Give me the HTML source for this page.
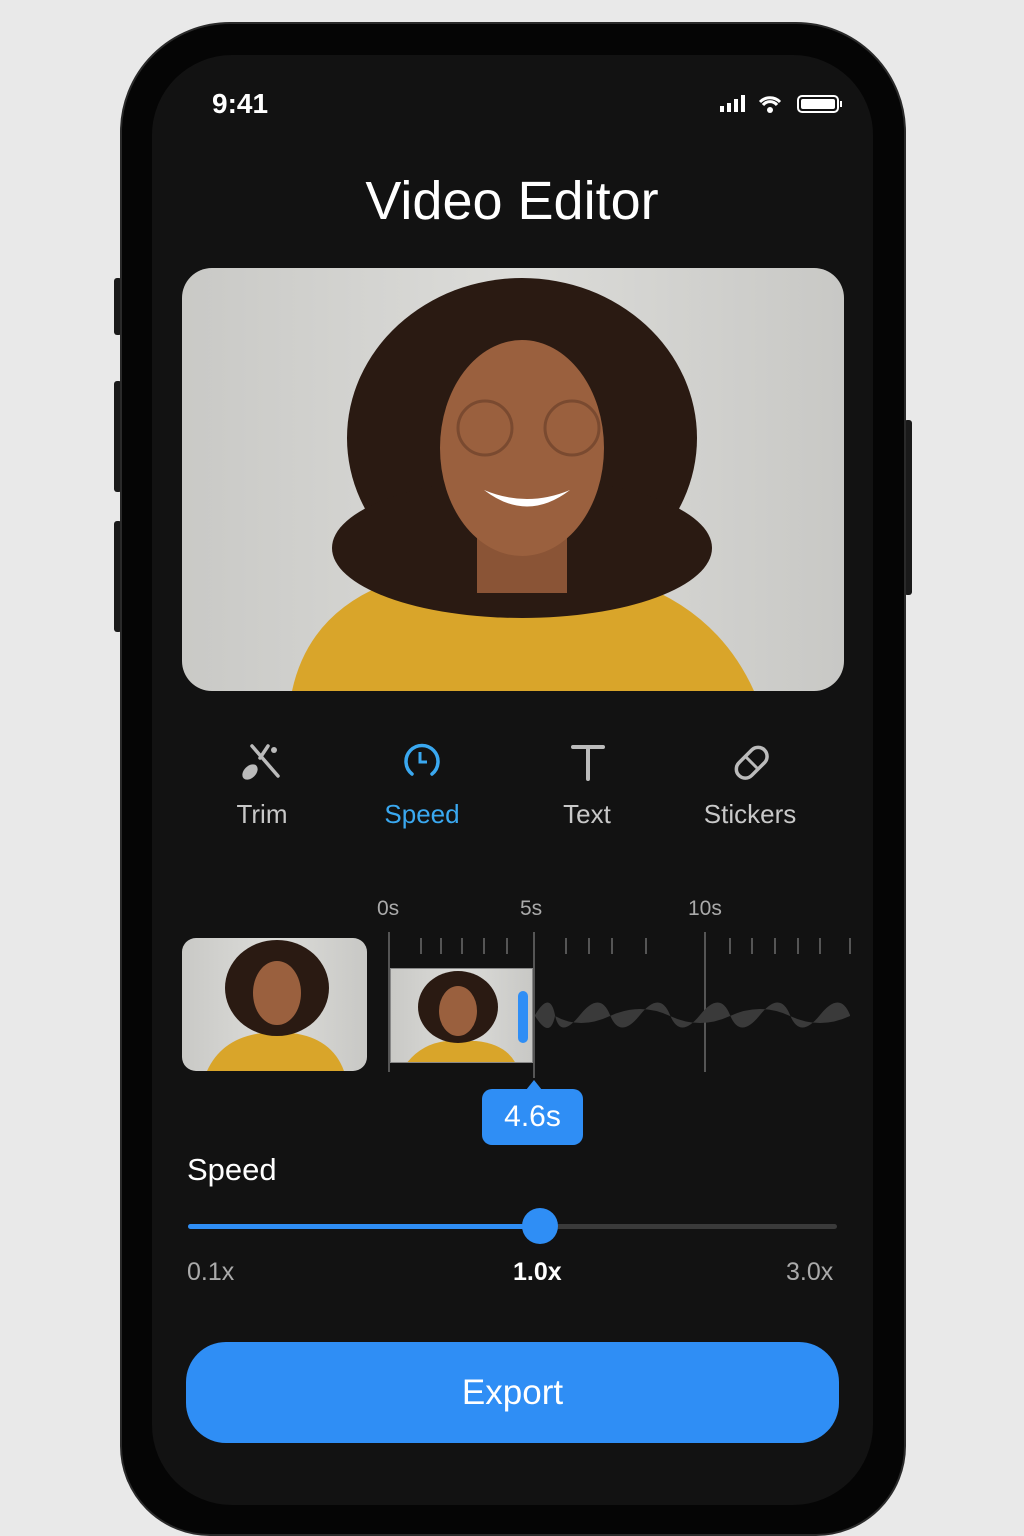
<!DOCTYPE html>
<html><head><meta charset="utf-8"><style>
*{margin:0;padding:0;box-sizing:border-box}
html,body{width:1024px;height:1536px;overflow:hidden}
body{background:#e9e9e9;position:relative;font-family:"Liberation Sans",sans-serif}
.abs{position:absolute}
.phone{left:120px;top:22px;width:786px;height:1514px;background:#050505;border-radius:110px 110px 90px 90px;border:2px solid #2a2a2a}
.screen{left:152px;top:55px;width:721px;height:1450px;background:#121212;border-radius:80px}
.btn{background:#1a1a1a;border-radius:3px}
.photo{overflow:hidden;background:linear-gradient(90deg,#c9c9c6,#dcdcd9 50%,#c8c8c5)}
.t{color:#fff;position:absolute}
</style></head><body>
<div class="abs btn" style="left:114px;top:278px;width:8px;height:57px"></div>
<div class="abs btn" style="left:114px;top:381px;width:8px;height:111px"></div>
<div class="abs btn" style="left:114px;top:521px;width:8px;height:111px"></div>
<div class="abs btn" style="left:904px;top:420px;width:8px;height:175px"></div>
<div class="abs phone"></div>
<div class="abs screen"></div>

<div class="t" style="left:212px;top:88px;font-size:28px;font-weight:bold">9:41</div>
<svg class="abs" style="left:718px;top:93px" width="126" height="22">
<rect x="2" y="13" width="4" height="6" fill="#fff"/><rect x="9" y="10" width="4" height="9" fill="#fff"/><rect x="16" y="6" width="4" height="13" fill="#fff"/><rect x="23" y="2" width="4" height="17" fill="#fff"/>
<path d="M42 9a14 14 0 0 1 20 0M45 12a9 9 0 0 1 14 0" stroke="#fff" stroke-width="3" fill="none"/><circle cx="52" cy="17" r="3" fill="#fff"/>
<rect x="80" y="3" width="40" height="16" rx="4" fill="none" stroke="#fff" stroke-width="2"/><rect x="83" y="6" width="34" height="10" rx="2" fill="#fff"/><rect x="122" y="8" width="2" height="6" fill="#fff"/>
</svg>
<div class="t" style="left:0;width:1024px;text-align:center;top:170px;font-size:54px">Video Editor</div>

<div class="abs photo" style="left:182px;top:268px;width:662px;height:423px;border-radius:30px">
 <svg width="662" height="423" viewBox="0 0 662 423">
 <path d="M110 423 Q130 330 240 305 L420 305 Q530 330 572 423Z" fill="#d9a52a"/>
 <ellipse cx="340" cy="170" rx="175" ry="160" fill="#2a1a12"/>
 <ellipse cx="340" cy="280" rx="190" ry="70" fill="#2a1a12"/>
 <rect x="295" y="240" width="90" height="85" fill="#8a5436"/>
 <ellipse cx="340" cy="180" rx="82" ry="108" fill="#9a603e"/>
 <circle cx="303" cy="160" r="27" fill="none" stroke="#7a4a30" stroke-width="3"/>
 <circle cx="390" cy="160" r="27" fill="none" stroke="#7a4a30" stroke-width="3"/>
 <path d="M302 222 Q345 255 388 222 Q345 240 302 222Z" fill="#fff"/>
 </svg>
</div>

<svg class="abs" style="left:240px;top:742px" width="44" height="40"><path d="M12 4 L38 34 M28 4 L20 16" stroke="#bbb" stroke-width="3.5" stroke-linecap="round"/><circle cx="34" cy="8" r="3" fill="#bbb"/><ellipse cx="10" cy="30" rx="6" ry="9" transform="rotate(45 10 30)" fill="#bbb"/></svg>
<svg class="abs" style="left:400px;top:740px" width="44" height="44"><path d="M12 34 A16 16 0 1 1 32 34" stroke="#3aa8f0" stroke-width="3.5" fill="none" stroke-linecap="round"/><path d="M20 12 V22 H27" stroke="#3aa8f0" stroke-width="3" fill="none"/></svg>
<svg class="abs" style="left:570px;top:744px" width="36" height="38"><path d="M3 3 H33 M18 3 V35" stroke="#bbb" stroke-width="4" stroke-linecap="round"/></svg>
<svg class="abs" style="left:729px;top:740px" width="44" height="44"><rect x="4" y="14" width="36" height="18" rx="9" transform="rotate(-45 22 22)" fill="none" stroke="#bbb" stroke-width="3.5"/><path d="M16 16 L28 28" stroke="#bbb" stroke-width="3"/></svg>
<div class="t" style="left:212px;width:100px;text-align:center;top:799px;font-size:26px;color:#c8c8c8">Trim</div>
<div class="t" style="left:362px;width:120px;text-align:center;top:799px;font-size:26px;color:#3aa8f0">Speed</div>
<div class="t" style="left:537px;width:100px;text-align:center;top:799px;font-size:26px;color:#c8c8c8">Text</div>
<div class="t" style="left:690px;width:120px;text-align:center;top:799px;font-size:26px;color:#c8c8c8">Stickers</div>

<div class="t" style="left:377px;top:897px;font-size:21px;color:#aaa">0s</div>
<div class="t" style="left:520px;top:897px;font-size:21px;color:#aaa">5s</div>
<div class="t" style="left:688px;top:897px;font-size:21px;color:#aaa">10s</div>
<svg class="abs" style="left:380px;top:930px" width="480" height="150">
<g stroke="#555" stroke-width="2"><path d="M9 2V142M154 2V148M325 2V142"/>
<path d="M41 8V24M61 8V24M82 8V24M104 8V24M127 8V24M186 8V24M209 8V24M232 8V24M266 8V24M350 8V24M372 8V24M395 8V24M418 8V24M440 8V24M470 8V24"/></g>
<path d="M155 85 Q170 60 175 85 T200 85 T230 85 T260 85 T290 85 T320 85 T350 85 T380 85 T410 85 T440 85 T470 85 L470 86 Q440 100 410 86 T350 86 T290 86 T230 86 T175 86 Q170 110 155 86Z" fill="#3a3a3a"/>
</svg>
<div class="abs photo" style="left:182px;top:938px;width:185px;height:133px;border-radius:14px">
 <svg width="185" height="133"><path d="M25 133 Q40 100 80 95 L110 95 Q150 100 162 133Z" fill="#d9a52a"/><ellipse cx="95" cy="50" rx="52" ry="48" fill="#2a1a12"/><ellipse cx="95" cy="55" rx="24" ry="32" fill="#9a603e"/></svg>
</div>
<div class="abs photo" style="left:390px;top:968px;width:143px;height:95px;border:1px solid #888">
 <svg width="143" height="95"><path d="M15 95 Q30 75 55 72 L85 72 Q115 75 125 95Z" fill="#d9a52a"/><ellipse cx="67" cy="38" rx="40" ry="36" fill="#2a1a12"/><ellipse cx="67" cy="42" rx="19" ry="25" fill="#9a603e"/></svg>
 <div class="abs" style="left:127px;top:22px;width:10px;height:52px;background:#2f8ef5;border-radius:5px"></div>
</div>
<div class="abs" style="left:482px;top:1089px;width:101px;height:56px;background:#2f8ef5;border-radius:10px;color:#fff;font-size:30px;text-align:center;line-height:56px">4.6s</div>
<div class="abs" style="left:526px;top:1080px;width:0;height:0;border-left:8px solid transparent;border-right:8px solid transparent;border-bottom:10px solid #2f8ef5"></div>

<div class="t" style="left:187px;top:1152px;font-size:31px">Speed</div>
<div class="abs" style="left:188px;top:1224px;width:649px;height:5px;background:#3a3a3a;border-radius:3px"></div>
<div class="abs" style="left:188px;top:1224px;width:352px;height:5px;background:#2f8ef5;border-radius:3px"></div>
<div class="abs" style="left:522px;top:1208px;width:36px;height:36px;background:#2f8ef5;border-radius:50%"></div>
<div class="t" style="left:187px;top:1258px;font-size:25px;color:#aaa">0.1x</div>
<div class="t" style="left:513px;top:1258px;font-size:25px;font-weight:bold">1.0x</div>
<div class="t" style="left:786px;top:1258px;font-size:25px;color:#aaa">3.0x</div>
<div class="abs" style="left:186px;top:1342px;width:653px;height:101px;background:#2f8ef5;border-radius:40px;color:#fff;font-size:35px;text-align:center;line-height:101px">Export</div>
</body></html>
